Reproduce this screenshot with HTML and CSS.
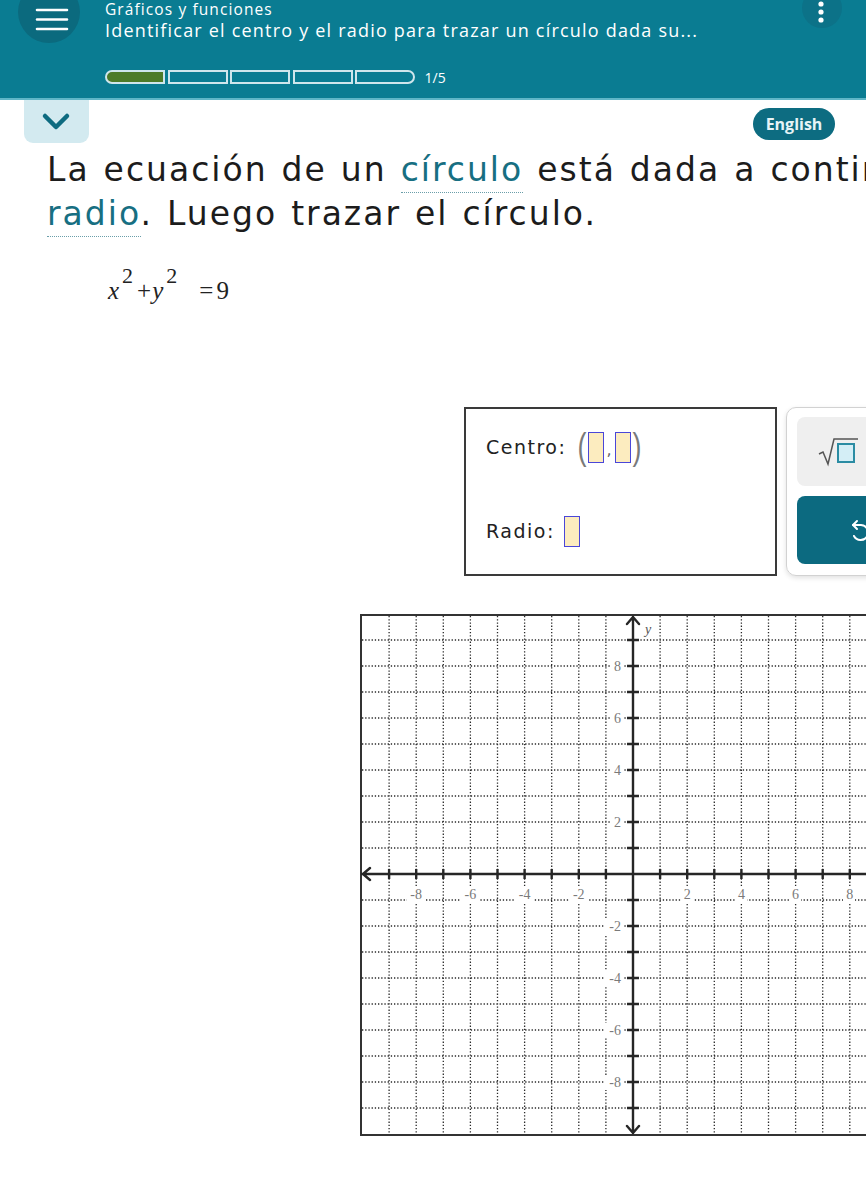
FILE: index.html
```html
<!DOCTYPE html>
<html lang="es">
<head>
<meta charset="utf-8">
<title>Identificar el centro y el radio</title>
<link rel="stylesheet" href="styles.css">
</head>
<body>
<header class="topbar">
  <button class="menu-btn" aria-label="Menú">
    <svg width="62" height="62" viewBox="0 0 62 62"><path d="M19 29H49M19 38.5H49M19 48H49" stroke="#fff" stroke-width="2.6" stroke-linecap="round"/></svg>
  </button>
  <div class="titles">
    <div class="crumb">Gráficos y funciones</div>
    <div class="topic">Identificar el centro y el radio para trazar un círculo dada su...</div>
    <div class="progress">
      <span class="seg seg-done"></span>
      <span class="seg"></span>
      <span class="seg"></span>
      <span class="seg"></span>
      <span class="seg seg-last"></span>
      <span class="count">1/5</span>
    </div>
  </div>
  <button class="more-btn" aria-label="Más">
    <svg width="40" height="40" viewBox="0 0 40 40"><circle cx="19" cy="16" r="2.6" fill="#fff"/><circle cx="19" cy="24" r="2.6" fill="#fff"/><circle cx="19" cy="32" r="2.6" fill="#fff"/></svg>
  </button>
</header>

<div class="subbar">
  <button class="collapse" aria-label="Contraer">
    <svg width="65" height="43" viewBox="0 0 65 43"><path d="M21 16L32 27L43 16" fill="none" stroke="#0d6b80" stroke-width="4.5" stroke-linecap="round" stroke-linejoin="round"/></svg>
  </button>
  <button class="lang">English</button>
</div>

<main class="content">
  <p class="question">La ecuación de un <span class="term">círculo</span> está dada a continuación. Identificar el centro y el<br><span class="term">radio</span>. Luego trazar el círculo.</p>

  <div class="equation"><i class="var">x</i><span class="sup">2</span><span class="op">+</span><i class="var">y</i><span class="sup">2</span><span class="op eq">=</span><span class="num">9</span></div>

  <div class="answer-row">
    <div class="answer-box">
      <div class="answer-line">
        <span class="label">Centro:</span>
        <span class="paren">(</span><span class="slot"></span><span class="comma">,</span><span class="slot"></span><span class="paren">)</span>
      </div>
      <div class="answer-line">
        <span class="label">Radio:</span>
        <span class="slot slot-r"></span>
      </div>
    </div>
    <div class="keypad">
      <button class="key key-sqrt" aria-label="Raíz cuadrada">
        <svg width="40" height="30" viewBox="0 0 40 30"><path d="M1 17L5 15L10 27L16 2H40" fill="none" stroke="#555" stroke-width="1.5"/><rect x="20" y="7" width="16" height="18" fill="#d4eef6" stroke="#2b8ca3" stroke-width="2"/></svg>
      </button>
      <button class="key key-undo" aria-label="Deshacer">
        <svg width="24" height="26" viewBox="0 0 24 26"><path d="M8 4L4 8L8 12" fill="none" stroke="#fff" stroke-width="2" stroke-linecap="round" stroke-linejoin="round"/><path d="M4 8H12A7.5 7.5 0 1 1 5 19" fill="none" stroke="#fff" stroke-width="2" stroke-linecap="round"/></svg>
      </button>
    </div>
  </div>

  <div class="graph">
    <svg width="546" height="522" viewBox="0 0 546 522">
      <rect x="1" y="1" width="544" height="520" fill="#fff" stroke="#333" stroke-width="2"/>
      <path class="grid" d="M29.1 2V520M56.2 2V520M83.3 2V520M110.4 2V520M137.5 2V520M164.6 2V520M191.7 2V520M218.8 2V520M245.9 2V520M300.1 2V520M327.2 2V520M354.3 2V520M381.4 2V520M408.5 2V520M435.6 2V520M462.7 2V520M489.8 2V520M516.9 2V520M2 26H546M2 52H546M2 78H546M2 104H546M2 130H546M2 156H546M2 182H546M2 208H546M2 234H546M2 286H546M2 312H546M2 338H546M2 364H546M2 390H546M2 416H546M2 442H546M2 468H546M2 494H546"/>
      <g fill="#fff">
        <rect x="47" y="274" width="19" height="15"/><rect x="101" y="274" width="19" height="15"/><rect x="155" y="274" width="19" height="15"/><rect x="209" y="274" width="19" height="15"/>
        <rect x="321" y="274" width="12" height="15"/><rect x="375" y="274" width="12" height="15"/><rect x="429" y="274" width="12" height="15"/><rect x="483" y="274" width="12" height="15"/>
        <rect x="250" y="45" width="13" height="15"/><rect x="250" y="97" width="13" height="15"/><rect x="250" y="149" width="13" height="15"/><rect x="250" y="201" width="13" height="15"/>
        <rect x="245" y="305" width="18" height="15"/><rect x="245" y="357" width="18" height="15"/><rect x="245" y="409" width="18" height="15"/><rect x="245" y="461" width="18" height="15"/>
      </g>
      <path class="axis" d="M273 3V519M2 260H546M267 10L273 3L279 10M267 512L273 519L279 512M10 254L3 260L10 266M538 254L545 260L538 266"/>
      <path class="ticks" d="M29.1 255v10M56.2 255v10M83.3 255v10M110.4 255v10M137.5 255v10M164.6 255v10M191.7 255v10M218.8 255v10M245.9 255v10M300.1 255v10M327.2 255v10M354.3 255v10M381.4 255v10M408.5 255v10M435.6 255v10M462.7 255v10M489.8 255v10M516.9 255v10M267 26h12M267 52h12M267 78h12M267 104h12M267 130h12M267 156h12M267 182h12M267 208h12M267 234h12M267 286h12M267 312h12M267 338h12M267 364h12M267 390h12M267 416h12M267 442h12M267 468h12M267 494h12"/>
      <g class="lbl-x">
        <text x="56.2" y="285">-8</text><text x="110.4" y="285">-6</text><text x="164.6" y="285">-4</text><text x="218.8" y="285">-2</text>
        <text x="327.2" y="285">2</text><text x="381.4" y="285">4</text><text x="435.6" y="285">6</text><text x="489.8" y="285">8</text>
      </g>
      <g class="lbl-y">
        <text x="261" y="57">8</text><text x="261" y="109">6</text><text x="261" y="161">4</text><text x="261" y="213">2</text>
        <text x="261" y="317">-2</text><text x="261" y="369">-4</text><text x="261" y="421">-6</text><text x="261" y="473">-8</text>
      </g>
      <text class="axis-name" x="285" y="20">y</text>
    </svg>
  </div>
</main>
</body>
</html>
```

FILE: styles.css
```css
html, body {
  margin: 0;
  padding: 0;
  overflow: hidden;
  background: #fff;
}

body {
  font-family: "DejaVu Sans", Verdana, sans-serif;
  color: #1e1e1e;
  width: 866px;
}

button {
  font: inherit;
  border: none;
  padding: 0;
  cursor: pointer;
}

/* ---------- top bar ---------- */
.topbar {
  display: flex;
  align-items: flex-start;
  height: 98px;
  background: #0a7c92;
  border-bottom: 2px solid #5fb6c7;
  font-family: "Open Sans", Lato, sans-serif;
  color: #fff;
}

.menu-btn {
  flex-shrink: 0;
  width: 62px;
  height: 62px;
  margin: -19px 0 0 18px;
  border-radius: 50%;
  background: #0b6a7e;
  display: flex;
}

.titles {
  flex: 1;
  margin-left: 25px;
  padding-top: 1px;
  white-space: nowrap;
}

.crumb {
  font-size: 15.5px;
  line-height: 17px;
  letter-spacing: 1.1px;
}

.topic {
  font-size: 18px;
  line-height: 24px;
  letter-spacing: 1.2px;
}

.progress {
  display: flex;
  align-items: center;
  gap: 2.5px;
  margin-top: 28px;
  height: 14px;
}

.seg {
  box-sizing: border-box;
  width: 60px;
  height: 14px;
  border: 2px solid #cfe6ec;
}

.seg-done {
  background: #4d7b28;
  border-radius: 8px 0 0 8px;
}

.seg-last {
  border-radius: 0 8px 8px 0;
}

.count {
  margin-left: 7px;
  font-size: 14px;
  color: #fff;
}

.more-btn {
  flex-shrink: 0;
  width: 40px;
  height: 40px;
  margin: -12px 24px 0 0;
  border-radius: 50%;
  background: #0c7288;
  display: flex;
}

/* ---------- sub bar ---------- */
.subbar {
  display: flex;
  justify-content: space-between;
  align-items: flex-start;
  height: 43px;
}

.collapse {
  width: 65px;
  height: 43px;
  margin-left: 24px;
  background: #d3eaf0;
  border-radius: 0 0 9px 9px;
  display: flex;
}

.lang {
  margin: 8px 31px 0 0;
  width: 82px;
  height: 32px;
  border-radius: 16px;
  background: #0d6c81;
  color: #e6f3f6;
  font-family: "Open Sans", Lato, sans-serif;
  font-weight: 700;
  font-size: 16px;
}

/* ---------- content ---------- */
.content {
  padding-left: 47px;
}

.question {
  margin: 5px 0 0;
  font-size: 33px;
  letter-spacing: 2px;
  word-spacing: 1.5px;
  line-height: 44px;
  white-space: nowrap;
  color: #1c1c1c;
}

.term {
  color: #176f82;
  border-bottom: 1px dotted #6a9ea9;
  padding-bottom: 3px;
}

.equation {
  margin: 29px 0 0 61px;
  font-family: "Liberation Serif", "Times New Roman", serif;
  font-size: 25px;
  line-height: 30px;
  color: #222;
  height: 36px;
}

.var {
  font-style: italic;
}

.sup {
  font-size: 22px;
  line-height: 22px;
  vertical-align: 16px;
  margin-left: 3px;
}

.op {
  margin: 0 1px 0 4px;
}

.eq {
  margin: 0 3px 0 22px;
}

/* ---------- answer area ---------- */
.answer-row {
  display: flex;
  margin: 106px 0 0 417px;
}

.answer-box {
  box-sizing: border-box;
  flex-shrink: 0;
  width: 313px;
  height: 169px;
  border: 2px solid #3a3a3a;
  padding: 18px 0 0 20px;
  display: flex;
  flex-direction: column;
  gap: 44px;
}

.answer-line {
  display: flex;
  align-items: center;
  height: 40px;
}

.label {
  font-size: 19px;
  line-height: 19px;
  letter-spacing: 1.5px;
  color: #222;
  margin-right: 10px;
}

.paren {
  font-family: "Liberation Sans", Arial, sans-serif;
  font-size: 36px;
  line-height: 40px;
  color: #7a7a7a;
  transform: scaleX(0.75);
}

.slot {
  box-sizing: border-box;
  width: 16px;
  height: 31px;
  background: #fcecbf;
  border: 1.5px solid #4a46d8;
}

.comma {
  font-size: 16px;
  color: #666;
  align-self: flex-end;
  margin: 0 4px 8px 2px;
}

.slot-r {
  margin-left: -1px;
}

.keypad {
  box-sizing: border-box;
  margin-left: 9px;
  width: 150px;
  height: 169px;
  border: 1px solid #d2d2d2;
  border-radius: 10px;
  box-shadow: 0 2px 5px rgba(0, 0, 0, 0.12);
  padding: 9px 10px;
  display: flex;
  flex-direction: column;
  gap: 10px;
  flex-shrink: 0;
}

.key {
  height: 69px;
  border-radius: 8px;
  display: flex;
  align-items: center;
}

.key-sqrt {
  background: #efefef;
  padding-left: 21px;
}

.key-undo {
  height: 68px;
  background: #0c6a80;
  padding-left: 52px;
}

/* ---------- graph ---------- */
.graph {
  margin: 38px 0 0 313px;
  width: 546px;
  height: 522px;
}

.graph svg {
  display: block;
  overflow: visible;
}

.grid {
  fill: none;
  stroke: #2a2a2a;
  stroke-width: 1.3;
  stroke-dasharray: 1.3 1.9;
}

.axis {
  fill: none;
  stroke: #262626;
  stroke-width: 2.4;
  stroke-linecap: round;
  stroke-linejoin: round;
}

.ticks {
  fill: none;
  stroke: #262626;
  stroke-width: 2.4;
}

.lbl-x text,
.lbl-y text,
.axis-name {
  font-family: "Liberation Serif", "Times New Roman", serif;
  font-size: 14px;
  fill: #7a7a7a;
}

.lbl-x text {
  text-anchor: middle;
}

.lbl-y text {
  text-anchor: end;
}

.axis-name {
  font-style: italic;
  fill: #555;
}
```
